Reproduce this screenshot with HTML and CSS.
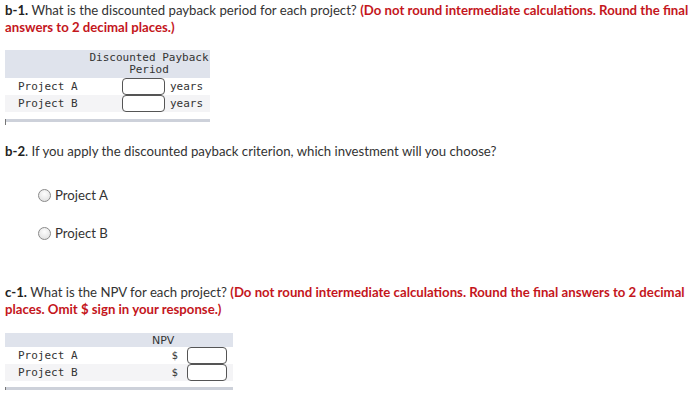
FILE: index.html
```html
<!DOCTYPE html>
<html>
<head>
<meta charset="utf-8">
<link rel="stylesheet" href="styles.css">
</head>
<body>
<p class="q q1"><b>b-1.</b> What is the discounted payback period for each project? <span class="red">(Do not round intermediate calculations. Round the final answers to 2 decimal places.)</span></p>

<div class="tbl t1">
  <div class="hdr">
    <div class="hcell mono">Discounted Payback<br>Period</div>
  </div>
  <div class="row">
    <div class="lbl mono">Project A</div>
    <div class="cell"><span class="inp"></span><span class="unit mono">years</span></div>
  </div>
  <div class="row alt">
    <div class="lbl mono">Project B</div>
    <div class="cell"><span class="inp"></span><span class="unit mono">years</span></div>
  </div>
  <div class="foot"></div>
</div>

<p class="q q2"><b>b-2</b>. If you apply the discounted payback criterion, which investment will you choose?</p>

<div class="radios">
  <label class="opt"><span class="radio"></span>Project A</label>
  <label class="opt"><span class="radio"></span>Project B</label>
</div>

<p class="q q3"><b>c-1.</b> What is the NPV for each project? <span class="red">(Do not round intermediate calculations. Round the final answers to 2 decimal places. Omit $ sign in your response.)</span></p>

<div class="tbl t2">
  <div class="hdr">
    <div class="hcell sans">NPV</div>
  </div>
  <div class="row">
    <div class="lbl mono">Project A</div>
    <div class="cell"><span class="cur">$</span><span class="inp"></span></div>
  </div>
  <div class="row alt">
    <div class="lbl mono">Project B</div>
    <div class="cell"><span class="cur">$</span><span class="inp"></span></div>
  </div>
  <div class="foot"></div>
</div>
</body>
</html>
```

FILE: styles.css
```css
* { box-sizing: border-box; }
body {
  margin: 0;
  padding: 0 5px;
  background: #fff;
  color: #333;
  font-family: "Lato", "Open Sans", sans-serif;
  font-size: 13.2px;
}
.q { margin: 0; line-height: 17px; }
.q b { font-weight: 700; color: #222; }
.red { color: #c4161c; font-weight: 700; }
.q1 { padding-top: 2px; }
.q2 { margin-top: 21px; }
.q3 { margin-top: 44px; }

.mono { font-family: "DejaVu Sans Mono", monospace; font-size: 11px; color: #333; }
.sans { font-family: "DejaVu Sans", sans-serif; font-size: 11px; }

.tbl { display: flex; flex-direction: column; }
.t1 { width: 205px; margin-top: 14px; }
.t2 { width: 228px; margin-top: 15px; }
.hdr { display: flex; background: #dfe3ec; align-items: flex-end; }
.t1 .hdr { height: 28px; justify-content: flex-end; }
.t2 .hdr { height: 14px; }
.hcell { white-space: nowrap; color: #333; }
.t1 .hcell { width: 122px; text-align: center; line-height: 12px; margin-bottom: 2px; }
.t2 .hcell { padding-left: 147px; line-height: 13px; }
.row { display: flex; align-items: center; height: 17px; }
.row.alt { background: #f4f4f6; }
.lbl { padding-left: 13px; }
.t1 .lbl { width: 117px; }
.t2 .lbl { width: 158px; }
.cell { display: flex; align-items: center; }
.inp {
  display: inline-block;
  height: 17px;
  border: 1px solid #555;
  border-radius: 4px;
  background: #fff;
}
.t1 .inp { width: 43px; }
.t2 .inp { width: 40px; }
.unit { margin-left: 5px; }
.cur { font-family: "DejaVu Sans", sans-serif; font-size: 10px; width: 24px; text-align: center; color: #333; }
.foot {
  margin-top: 7px;
  height: 3px;
  background: #cdd1da;
  position: relative;
}
.foot::before {
  content: "";
  position: absolute;
  left: 0;
  top: 0;
  width: 1px;
  height: 6px;
  background: #777;
}
.t2 .foot { margin-top: 6px; }

.radios { display: flex; flex-direction: column; gap: 24px; padding-left: 33px; margin-top: 28px; }
.opt { display: flex; align-items: center; height: 14px; font-size: 13.2px; color: #333; }
.radio {
  width: 13px; height: 13px;
  border-radius: 50%;
  border: 1px solid #8a8a8a;
  background: radial-gradient(circle at 50% 35%, #fdfdfd, #dcdcdc);
  margin-right: 4px;
}
```
